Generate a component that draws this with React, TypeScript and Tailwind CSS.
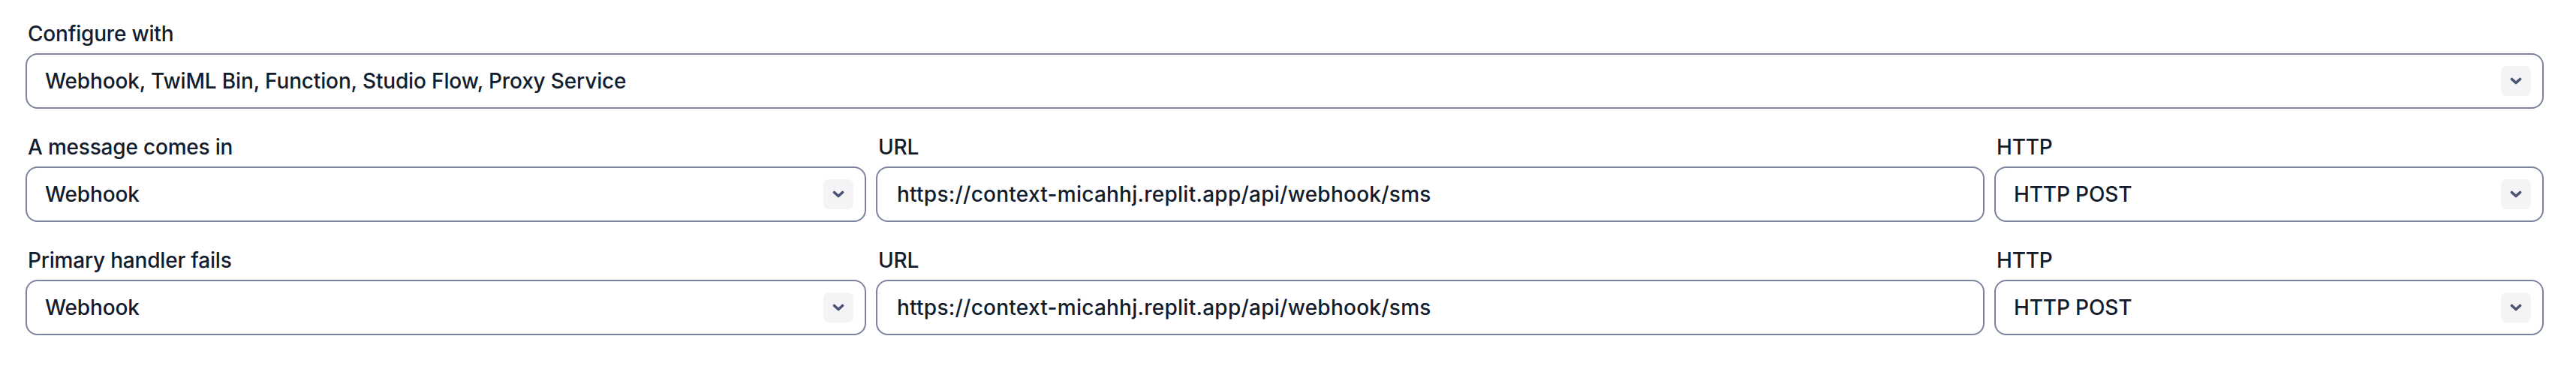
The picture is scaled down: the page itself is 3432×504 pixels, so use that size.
import React from 'react'

const font = { fontFamily: 'Inter, "Noto Sans", sans-serif' }

function Chevron() {
  return (
    <div className="flex items-center justify-center w-[40px] h-[40px] rounded-[8px] bg-[#f4f4f6] shrink-0">
      <svg width="16" height="10" viewBox="0 0 16 10" fill="none">
        <path d="M2.5 2.5 L8 7.5 L13.5 2.5" stroke="#4b5473" strokeWidth="3.6" strokeLinecap="round" strokeLinejoin="round" />
      </svg>
    </div>
  )
}

function Field({ label, children, className = '' }: { label: string; children: React.ReactNode; className?: string }) {
  return (
    <div className={`flex flex-col gap-[8px] ${className}`}>
      <label className="pl-[3px] text-[28px] leading-[36px] font-medium tracking-[-0.2px] text-[#121c2d]">{label}</label>
      {children}
    </div>
  )
}

function Select({ value }: { value: string }) {
  return (
    <div className="flex items-center justify-between h-[74px] rounded-[16px] border-2 border-[#7b839e] bg-white pl-[24px] pr-[15px]">
      <span className="text-[28px] font-medium tracking-[-0.15px] text-[#121c2d] truncate">{value}</span>
      <Chevron />
    </div>
  )
}

function TextInput({ value }: { value: string }) {
  return (
    <div className="flex items-center h-[74px] rounded-[16px] border-2 border-[#7b839e] bg-white pl-[26px] pr-[15px]">
      <span className="text-[28px] font-medium tracking-[0.25px] text-[#121c2d] truncate">{value}</span>
    </div>
  )
}

const handlerUrl = 'https://context-micahhj.replit.app/api/webhook/sms'

export default function App() {
  const rows = [
    { label: 'A message comes in' },
    { label: 'Primary handler fails' },
  ]

  return (
    <div className="w-[3432px] h-[504px] bg-white pt-[27px] pl-[34px] pr-[43px]" style={font}>
      <div className="flex flex-col gap-[33px]">
        <Field label="Configure with">
          <Select value="Webhook, TwiML Bin, Function, Studio Flow, Proxy Service" />
        </Field>

        {rows.map((row) => (
          <div key={row.label} className="flex gap-[13px]">
            <Field label={row.label} className="w-[1120px] shrink-0">
              <Select value="Webhook" />
            </Field>
            <Field label="URL" className="flex-1 min-w-0">
              <TextInput value={handlerUrl} />
            </Field>
            <Field label="HTTP" className="w-[732px] shrink-0">
              <Select value="HTTP POST" />
            </Field>
          </div>
        ))}
      </div>
    </div>
  )
}
